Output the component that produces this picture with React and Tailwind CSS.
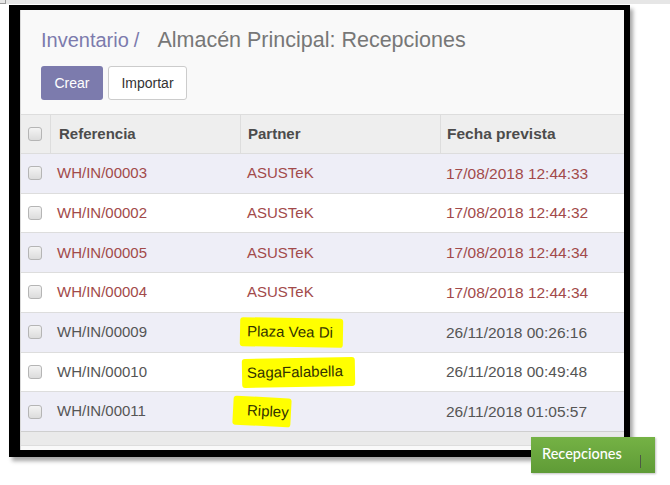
const rows = [
  { ref: "WH/IN/00003", partner: "ASUSTeK", date: "17/08/2018 12:44:33", late: true },
  { ref: "WH/IN/00002", partner: "ASUSTeK", date: "17/08/2018 12:44:32", late: true },
  { ref: "WH/IN/00005", partner: "ASUSTeK", date: "17/08/2018 12:44:34", late: true },
  { ref: "WH/IN/00004", partner: "ASUSTeK", date: "17/08/2018 12:44:34", late: true },
  { ref: "WH/IN/00009", partner: "Plaza Vea Di", date: "26/11/2018 00:26:16", mark: "pl-[7px] pr-[10px] -ml-[7px] rotate-[1deg]" },
  { ref: "WH/IN/00010", partner: "SagaFalabella", date: "26/11/2018 00:49:48", mark: "pl-[5px] pr-[12px] -ml-[5px] -rotate-[1deg]" },
  { ref: "WH/IN/00011", partner: "Ripley", date: "26/11/2018 01:05:57", mark: "pl-[14px] pr-[2px] -ml-[14px] rotate-[3deg]" },
];

function Check() {
  return (
    <span className="block w-[14px] h-[14px] rounded-[3px] border border-[#b5b5b5] bg-gradient-to-b from-[#f4f4f4] to-[#dcdcdc]" />
  );
}

export default function App() {
  return (
    <div
      className="relative w-[670px] h-[485px] bg-white overflow-hidden"
      style={{ fontFamily: '"Liberation Sans", Arial, sans-serif' }}
    >
      <div className="h-[4px] bg-[#e6e6e6] flex">
        <span className="w-[6px] h-[4px] border-r border-b border-[#9a9a9a]" />
      </div>

      <div className="ml-[9px] mt-[1px] w-[621px] h-[452px] border-l-[11px] border-t-[5px] border-r-[6px] border-b-[7px] border-black shadow-[3px_4px_4px_rgba(0,0,0,0.35)]">
        <div className="h-full bg-[#f9f9f9] border-l border-[#d9d9d9] flex flex-col">
          <div className="pl-[20px] pt-[16px] h-[56px] leading-[28px] flex items-baseline">
            <span className="text-[#7c7bad] text-[20px]">Inventario</span>
            <span className="text-[#7c7bad] text-[20px] ml-[5px]">/</span>
            <span className="text-[#777777] text-[21.5px] ml-[18px]">Almacén Principal: Recepciones</span>
          </div>

          <div className="pl-[20px] flex gap-[5px] h-[48px]">
            <button className="h-[34px] w-[62px] rounded-[3px] bg-[#7c7bad] text-white text-[14px]">
              Crear
            </button>
            <button className="h-[34px] w-[79px] rounded-[3px] bg-white border border-[#cccccc] text-[#333333] text-[14px]">
              Importar
            </button>
          </div>

          <div className="grid grid-cols-[29px_190px_200px_1fr] h-[39px] bg-[#eeeeee] border-t border-[#dddddd] text-[15px] font-bold text-[#4c4c4c]">
            <div className="flex items-center pl-[7px]">
              <Check />
            </div>
            <div className="flex items-center pl-[8px] border-l border-[#dddddd]">Referencia</div>
            <div className="flex items-center pl-[7px] border-l border-[#dddddd]">Partner</div>
            <div className="flex items-center pl-[6px] border-l border-[#dddddd] text-[15.5px]">Fecha prevista</div>
          </div>

          <div className="grid grid-rows-7 h-[278px] text-[15px]">
            {rows.map((r, i) => (
              <div
                key={r.ref}
                className={`grid grid-cols-[29px_190px_200px_1fr] items-center border-t border-[#dddddd] ${
                  i % 2 === 0 ? "bg-[#eeeef7]" : "bg-white"
                } ${r.late ? "text-[#a24a4a]" : "text-[#555555]"}`}
              >
                <div className="pl-[7px]">
                  <Check />
                </div>
                <div className="pl-[7px]">{r.ref}</div>
                <div className="pl-[7px]">
                  {r.mark ? (
                    <span className={`inline-block bg-[#ffff00] rounded-[3px] py-[3px] ${r.mark}`}>
                      <span className="inline-block text-[#333300]">{r.partner}</span>
                    </span>
                  ) : (
                    r.partner
                  )}
                </div>
                <div className="pl-[6px] text-[15.5px]">{r.date}</div>
              </div>
            ))}
          </div>

          <div className="h-[14px] bg-[#eaeaea] border-t border-[#cfcfcf]" />
          <div className="flex-1 border-t border-[#dddddd] bg-[#f9f9f9]" />
        </div>
      </div>

      <div
        className="absolute left-[531px] top-[437px] w-[124px] h-[36px] bg-gradient-to-b from-[#75b245] to-[#5f9b36] shadow-[1px_1px_2px_rgba(0,0,0,0.25)] flex items-center pl-[11px]"
        style={{ fontFamily: 'Lato, "Open Sans", sans-serif' }}
      >
        <span className="text-white text-[14.5px] font-medium leading-none -mt-[2px]">Recepciones</span>
        <span className="absolute left-[109px] top-[18px] w-[1px] h-[13px] bg-[#4d5a44]" />
      </div>
    </div>
  );
}
